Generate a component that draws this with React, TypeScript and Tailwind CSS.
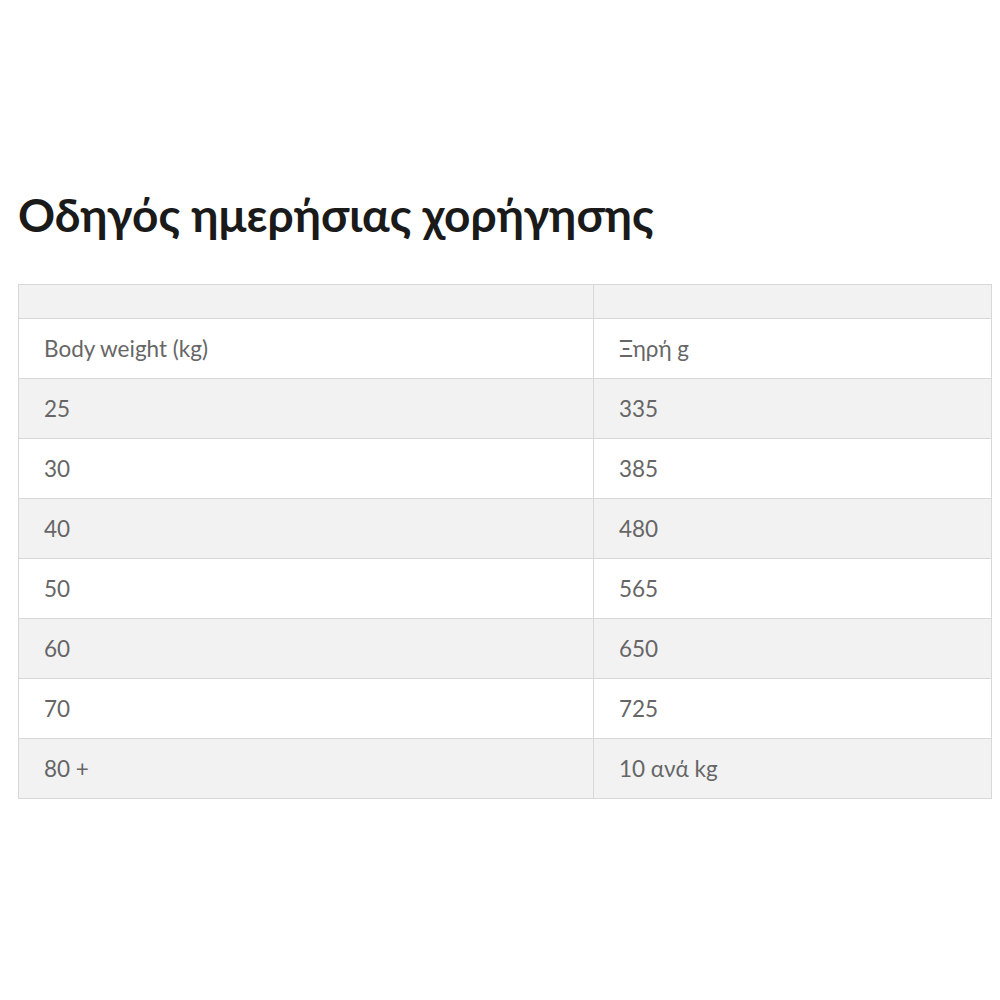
const rows: [string, string][] = [
  ['Body weight (kg)', 'Ξηρή g'],
  ['25', '335'],
  ['30', '385'],
  ['40', '480'],
  ['50', '565'],
  ['60', '650'],
  ['70', '725'],
  ['80 +', '10 ανά kg'],
]

export default function App() {
  return (
    <div className="min-h-screen bg-white px-[18px] pt-[184px]" style={{ fontFamily: 'Lato, "Noto Sans", sans-serif' }}>
      <h1 className="text-[46px] font-bold leading-[62px] text-[#1a1a1a]">
        Οδηγός ημερήσιας χορήγησης
      </h1>
      <table className="mt-[38px] w-[974px] border-collapse text-[22.5px] text-[#666666]">
        <colgroup>
          <col className="w-[575px]" />
          <col />
        </colgroup>
        <thead>
          <tr className="h-[34px] bg-[#f2f2f3]">
            <th className="border border-[#d8d8d8]"></th>
            <th className="border border-[#d8d8d8]"></th>
          </tr>
        </thead>
        <tbody>
          {rows.map(([a, b], i) => (
            <tr key={a} className={`h-[60px] ${i % 2 === 1 ? 'bg-[#f2f2f3]' : 'bg-white'}`}>
              <td className="border border-[#d8d8d8] px-[25px] text-left font-normal">{a}</td>
              <td className="border border-[#d8d8d8] px-[25px] text-left font-normal">{b}</td>
            </tr>
          ))}
        </tbody>
      </table>
    </div>
  )
}
